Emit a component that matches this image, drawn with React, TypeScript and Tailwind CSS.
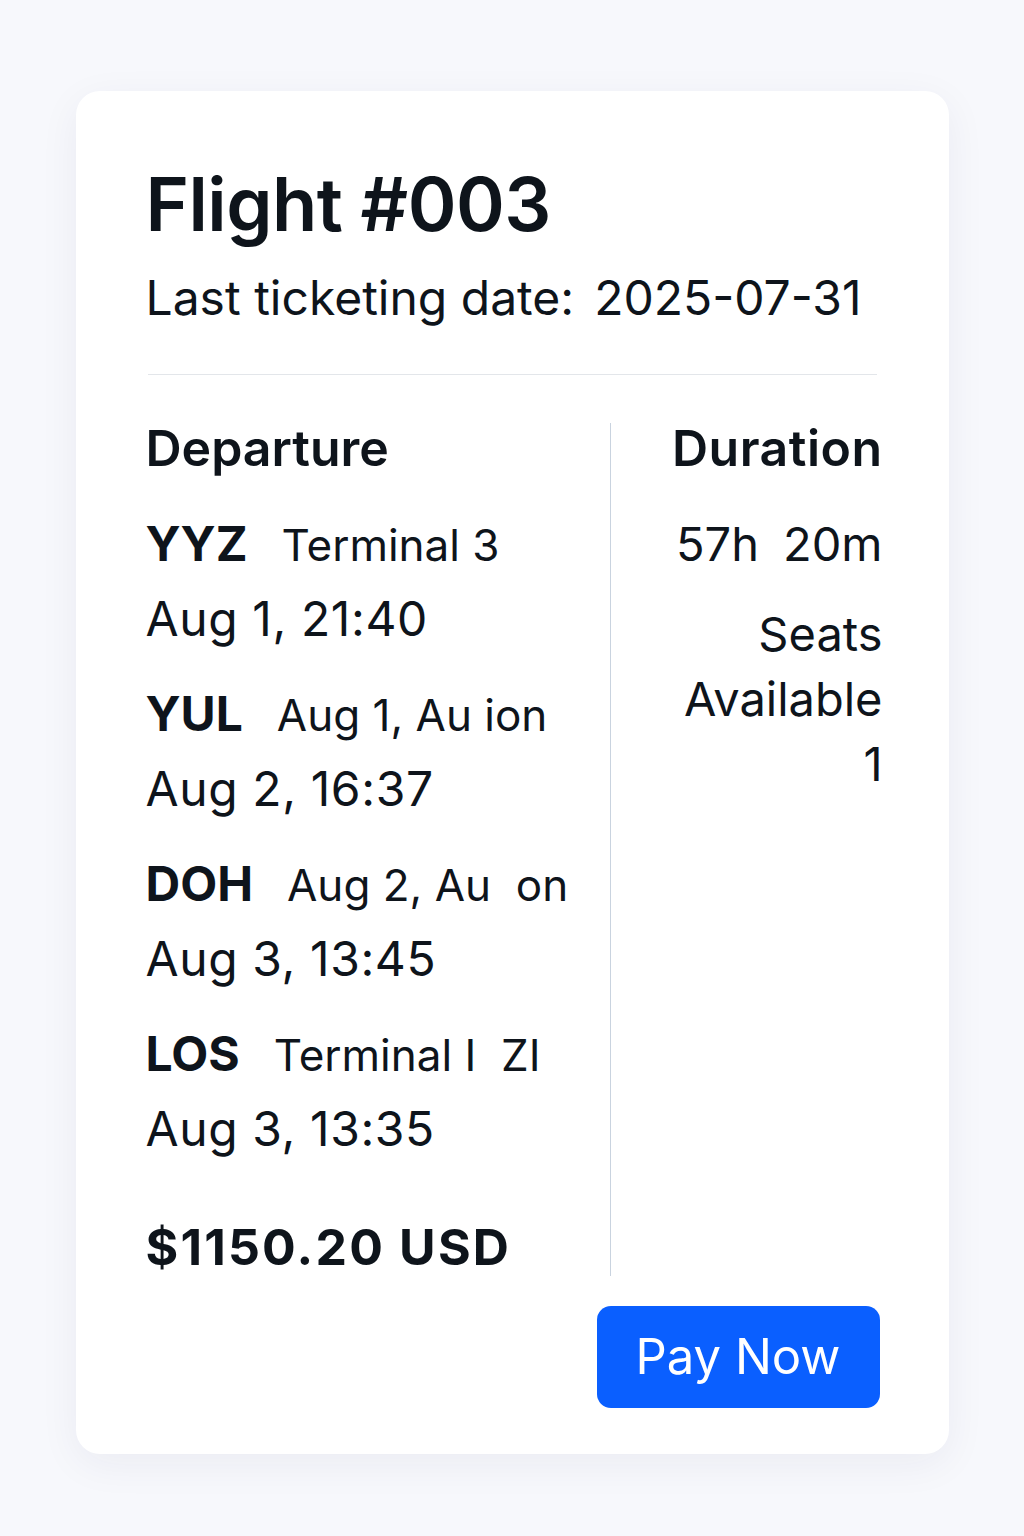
import React from 'react';

interface Segment {
  code: string;
  detail: string;
  time: string;
}

const segments: Segment[] = [
  { code: 'YYZ', detail: 'Terminal 3', time: 'Aug 1, 21:40' },
  { code: 'YUL', detail: 'Aug 1, Au ion', time: 'Aug 2, 16:37' },
  { code: 'DOH', detail: 'Aug 2, Au  on', time: 'Aug 3, 13:45' },
  { code: 'LOS', detail: 'Terminal I  ZI', time: 'Aug 3, 13:35' },
];

const App: React.FC = () => {
  return (
    <div className="min-h-screen bg-[#f7f8fc] pt-[91px] pb-[82px] text-[#0e141b] [font-family:Inter,'Noto_Sans',sans-serif]">
      <div className="mx-auto w-[873px] rounded-[24px] bg-white pl-[70px] pr-[72px] pt-[76px] pb-[46px] shadow-[0_10px_40px_rgba(30,41,80,0.06)]">
        <h1 className="text-[74px] font-semibold leading-none tracking-[-0.5px]">Flight #003</h1>
        <p className="mt-[33px] text-[48px] leading-none">
          Last ticketing date:<span className="ml-[20px]">2025-07-31</span>
        </p>

        <div className="mt-[52px] ml-[2px] h-px bg-[#e3e6ea]" />

        <div className="mt-[48px] flex -mr-[6px]">
          {/* departures */}
          <div className="w-[465px] border-r border-[#c9d3df] pb-[4px]">
            <h2 className="text-[50px] font-semibold leading-none">Departure</h2>
            <div className="mt-[34px] flex flex-col gap-[21px]">
              {segments.map(s => (
                <div key={s.code}>
                  <div className="flex items-baseline whitespace-pre leading-[74px]">
                    <span className="text-[48px] font-bold">{s.code}</span>
                    <span className="ml-[34px] text-[44px]">{s.detail}</span>
                  </div>
                  <p className="text-[48px] leading-[74px] tracking-[0.6px]">{s.time}</p>
                </div>
              ))}
            </div>
            <p className="mt-[56px] text-[50px] font-bold leading-none tracking-[2.2px]">$1150.20 USD</p>
          </div>

          {/* duration + seats */}
          <div className="flex-1 text-right">
            <h2 className="text-[50px] font-semibold leading-none tracking-[0.5px]">Duration</h2>
            <p className="mt-[34px] text-[47px] leading-[74px]">
              57h<span className="ml-[24px]">20m</span>
            </p>
            <div className="mt-[20px] text-[47px] leading-[65px]">
              <p>Seats</p>
              <p>Available</p>
              <p>1</p>
            </div>
          </div>
        </div>

        <div className="mt-[30px] flex justify-end -mr-[3px]">
          <button className="h-[102px] w-[283px] rounded-[14px] bg-[#0a5fff] text-[49px] text-white">
            Pay Now
          </button>
        </div>
      </div>
    </div>
  );
};

export default App;
